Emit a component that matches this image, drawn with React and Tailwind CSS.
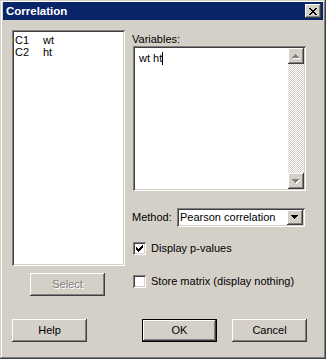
import React from "react";

const raised =
  "bg-[#d4d0c8] shadow-[inset_-1px_-1px_#404040,inset_1px_1px_#ffffff,inset_-2px_-2px_#808080,inset_2px_2px_#d4d0c8]";
const sunken =
  "shadow-[inset_1px_1px_#808080,inset_-1px_-1px_#ffffff,inset_2px_2px_#404040,inset_-2px_-2px_#d4d0c8]";

function CloseX() {
  const px = [
    [0, 0], [1, 0], [6, 0], [7, 0],
    [1, 1], [2, 1], [5, 1], [6, 1],
    [2, 2], [3, 2], [4, 2], [5, 2],
    [3, 3], [4, 3],
    [2, 4], [3, 4], [4, 4], [5, 4],
    [1, 5], [2, 5], [5, 5], [6, 5],
    [0, 6], [1, 6], [6, 6], [7, 6],
  ];
  return (
    <svg width="8" height="7" viewBox="0 0 8 7" shapeRendering="crispEdges">
      {px.map(([x, y], i) => (
        <rect key={i} x={x} y={y} width="1" height="1" fill="#000" />
      ))}
    </svg>
  );
}

function Check() {
  const px = [
    [6, 0],
    [5, 1], [6, 1],
    [0, 2], [4, 2], [5, 2], [6, 2],
    [0, 3], [1, 3], [3, 3], [4, 3], [5, 3],
    [0, 4], [1, 4], [2, 4], [3, 4], [4, 4],
    [1, 5], [2, 5], [3, 5],
    [2, 6],
  ];
  return (
    <svg width="7" height="7" viewBox="0 0 7 7" shapeRendering="crispEdges">
      {px.map(([x, y], i) => (
        <rect key={i} x={x} y={y} width="1" height="1" fill="#000" />
      ))}
    </svg>
  );
}

function Tri({ dir = "up", color = "#000", shadow }) {
  const pts = dir === "up" ? "3.5,0 7,4 0,4" : "0,0 7,0 3.5,4";
  return (
    <svg width="8" height="5" viewBox="0 0 8 5" shapeRendering="crispEdges">
      {shadow && (
        <polygon points={dir === "up" ? "4.5,1 8,5 1,5" : "1,1 8,1 4.5,5"} fill={shadow} />
      )}
      <polygon points={pts} fill={color} />
    </svg>
  );
}

function CheckBox({ checked }) {
  return (
    <div className={`w-[13px] h-[13px] bg-white ${sunken} flex items-center justify-center`}>
      {checked && <Check />}
    </div>
  );
}

function Button({ children, className = "", disabled, isDefault }) {
  return (
    <div
      className={`w-[75px] h-[23px] flex items-center justify-center ${
        isDefault ? "border border-black" : ""
      } ${raised} ${className}`}
    >
      <span
        className={
          disabled ? "text-[#808080] [text-shadow:1px_1px_0_#ffffff]" : "text-black"
        }
      >
        {children}
      </span>
    </div>
  );
}

export default function App() {
  return (
    <div className="w-[328px] h-[362px] bg-white overflow-hidden font-[family-name:'Liberation_Sans',Arial,sans-serif] text-[11px] leading-[13px] text-black">
      <div className="w-[326px] h-[359px] bg-[#d4d0c8] shadow-[inset_-1px_-1px_#404040,inset_1px_1px_#d4d0c8,inset_-2px_-2px_#808080,inset_2px_2px_#ffffff] pt-[2px] px-[3px] flex flex-col">
        {/* Title bar */}
        <div className="h-[18px] bg-[#0a246a] flex items-center justify-between pl-[3px] pr-[2px]">
          <span className="text-white font-bold text-[11.5px] leading-[14px]">Correlation</span>
          <div className={`w-[16px] h-[14px] ${raised} flex items-center justify-center`}>
            <CloseX />
          </div>
        </div>

        {/* Body */}
        <div className="flex pl-[9px] mt-[10px]">
          {/* Left column */}
          <div className="w-[113px] flex flex-col">
            <div className={`h-[236px] bg-white ${sunken} pt-[4px] pl-[3px] leading-[12px]`}>
              <div className="flex">
                <span className="w-[28px]">C1</span>
                <span>wt</span>
              </div>
              <div className="flex">
                <span className="w-[28px]">C2</span>
                <span>ht</span>
              </div>
            </div>
            <Button className="ml-[18px] mt-[7px]" disabled>
              Select
            </Button>
          </div>

          {/* Right column */}
          <div className="w-[173px] ml-[8px] flex flex-col pt-[3px]">
            <div className="h-[13px] -ml-px">Variables:</div>
            <div className={`h-[145px] bg-white ${sunken} p-[2px] flex`}>
              <div className="flex-1 pl-[4px] pt-[4px]">
                <div className="flex items-center">
                  <span>wt ht</span>
                  <span className="inline-block w-px h-[13px] bg-black" />
                </div>
              </div>
              <div className="w-[16px] flex flex-col">
                <div className={`w-[16px] h-[16px] ${raised} flex items-center justify-center`}>
                  <Tri dir="up" color="#808080" shadow="#ffffff" />
                </div>
                <div className="flex-1 bg-[repeating-conic-gradient(#d4d0c8_0%_25%,#ffffff_0%_50%)] bg-[length:2px_2px]" />
                <div className={`w-[16px] h-[16px] ${raised} flex items-center justify-center`}>
                  <Tri dir="down" color="#808080" shadow="#ffffff" />
                </div>
              </div>
            </div>

            <div className="flex items-center mt-[17px] h-[19px]">
              <span className="w-[45px] -ml-px">Method:</span>
              <div className={`w-[128px] h-[19px] bg-white ${sunken} p-[2px] flex items-center`}>
                <span className="flex-1 pl-[1px]">Pearson correlation</span>
                <div className={`w-[16px] h-[15px] ${raised} flex items-center justify-center`}>
                  <Tri dir="down" color="#000000" />
                </div>
              </div>
            </div>

            <div className="flex items-center gap-[5px] mt-[15px] h-[13px]">
              <CheckBox checked />
              <span>Display p-values</span>
            </div>
            <div className="flex items-center gap-[5px] mt-[20px] h-[13px]">
              <CheckBox />
              <span>Store matrix (display nothing)</span>
            </div>
          </div>
        </div>

        {/* Bottom buttons */}
        <div className="flex pl-[9px] mt-[23px]">
          <Button>Help</Button>
          <Button className="ml-[55px]" isDefault>
            OK
          </Button>
          <Button className="ml-[15px]">Cancel</Button>
        </div>
      </div>
    </div>
  );
}
